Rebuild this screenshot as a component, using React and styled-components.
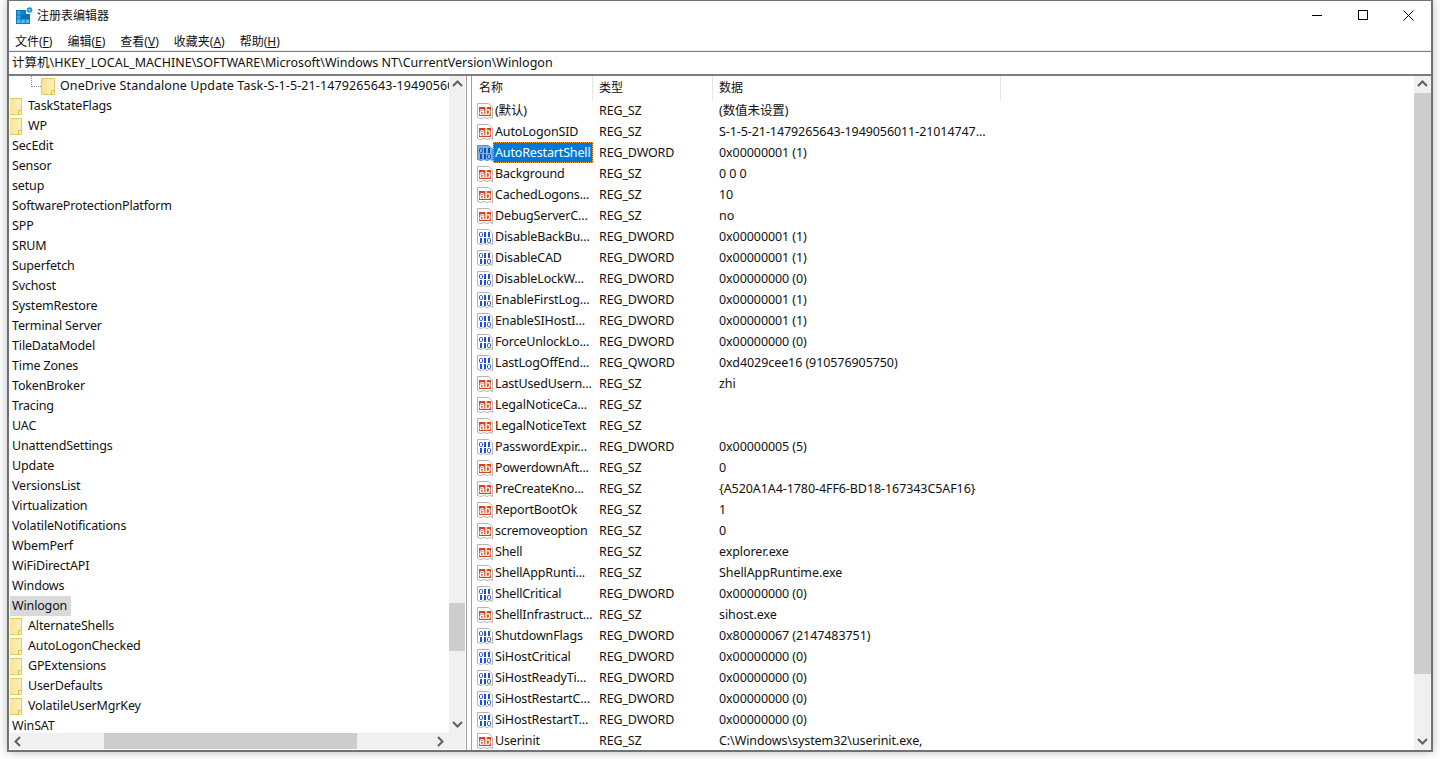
import React from "react";
import styled, { createGlobalStyle } from "styled-components";

const GlobalStyle = createGlobalStyle`
	html, body {
		margin: 0;
		padding: 0;
		height: 100%;
		overflow: hidden;
		background: #fff;
	}
`;

const UI_FONT = `"Noto Sans", "Noto Sans CJK SC", sans-serif`;

const Page = styled.div`
	height: 759px;
	padding: 0 7px;
	box-sizing: border-box;
	font-family: ${UI_FONT};
	font-size: 12.5px;
	letter-spacing: -0.15px;
	color: #111;
`;

const Window = styled.div`
	display: flex;
	flex-direction: column;
	height: 752px;
	box-sizing: border-box;
	background: #fff;
	border: 2px solid #6f7277;
	border-top-width: 1px;
	box-shadow: 0 0 9px rgba(0, 0, 0, 0.28);
	overflow: hidden;
`;

const TitleBar = styled.div`
	display: flex;
	align-items: center;
	height: 29px;
	flex: none;
	padding-left: 7px;
`;

const Title = styled.span`
	margin-left: 3px;
	padding-bottom: 2px;
	font-size: 12px;
	letter-spacing: 0;
	flex: 1;
`;

const WinButton = styled.div`
	display: flex;
	align-items: flex-start;
	justify-content: center;
	width: 45.5px;
	height: 29px;
	padding-top: 9px;
	box-sizing: border-box;
`;

const MenuBar = styled.div`
	display: flex;
	height: 18px;
	flex: none;
	padding: 2px 0 0 6px;
	align-items: center;
	border-bottom: 1px solid #f0f0f0;
	font-size: 12px;
	letter-spacing: 0;
`;

const MenuItem = styled.span`
	padding-right: 15px;
`;

const AddressBar = styled.div`
	height: 22px;
	flex: none;
	line-height: 21px;
	padding-left: 3px;
	border-top: 1px solid #7b7d80;
	border-bottom: 2px solid #7b7d80;
	letter-spacing: 0;
	white-space: nowrap;
`;

const Panes = styled.div`
	display: flex;
	flex: 1;
	min-height: 0;
`;

const TreePane = styled.div`
	display: grid;
	grid-template-columns: 439px 16px;
	grid-template-rows: 657px 16px;
	width: 455px;
	margin-left: 1px;
	flex: none;
`;

const TreeList = styled.div`
	overflow: hidden;
	background: #fff;
`;

const TreeRow = styled.div`
	display: flex;
	align-items: flex-start;
	height: 20px;
	white-space: nowrap;
`;

const TreeBranch = styled.span`
	flex: none;
	width: 10px;
	height: 11px;
	margin-left: 21px;
	box-sizing: border-box;
	border-left: 1px dotted #888;
	border-bottom: 1px dotted #888;
`;

const TreeLabel = styled.span`
	display: inline-block;
	height: 20px;
	line-height: 20px;
	padding: ${(p) => (p.$plain ? "0 4px 0 2px" : "0")};
	letter-spacing: ${(p) => (p.$long ? "0.1px" : "inherit")};
	background: ${(p) => (p.$active ? "#d9d9d9" : "transparent")};
`;

const FolderGlyph = styled.svg`
	flex: none;
	margin-top: 2px;
	margin-left: ${(p) => p.$offset}px;
	margin-right: ${(p) => p.$after}px;
`;

const ScrollTrack = styled.div`
	display: flex;
	flex-direction: ${(p) => (p.$horizontal ? "row" : "column")};
	flex: none;
	width: ${(p) => (p.$width ? `${p.$width}px` : "auto")};
	background: #f0f0f0;
	min-width: 0;
	min-height: 0;
`;

const ArrowCell = styled.div`
	display: flex;
	align-items: center;
	justify-content: center;
	flex: none;
	width: ${(p) => (p.$horizontal ? "17px" : "auto")};
	height: ${(p) => (p.$horizontal ? "auto" : "17px")};
`;

const TrackBody = styled.div`
	flex: 1;
	min-width: 0;
	min-height: 0;
`;

const ThumbV = styled.div`
	height: ${(p) => p.$size}px;
	margin-top: ${(p) => p.$start}px;
	background: #cdcdcd;
`;

const ThumbH = styled.div`
	width: ${(p) => p.$size}px;
	height: 100%;
	margin-left: ${(p) => p.$start}px;
	background: #cdcdcd;
`;

const Corner = styled.div`
	background: #f0f0f0;
`;

const Splitter = styled.div`
	flex: none;
	width: 6px;
	margin-left: 1px;
	box-sizing: border-box;
	border-left: 1px solid #a0a0a0;
	border-right: 1px solid #a0a0a0;
	background: #fff;
`;

const ValuePane = styled.div`
	display: flex;
	flex: 1;
	min-width: 0;
`;

const ValueBody = styled.div`
	flex: 1;
	min-width: 0;
	overflow: hidden;
`;

const HeaderRow = styled.div`
	display: flex;
	height: 24px;
`;

const HeaderCell = styled.div`
	width: ${(p) => p.$width}px;
	flex: none;
	box-sizing: border-box;
	padding-left: ${(p) => p.$pad}px;
	line-height: 23px;
	font-size: 12px;
	letter-spacing: 0;
	border-right: 1px solid #e5e5e5;
`;

const ValueRow = styled.div`
	display: flex;
	align-items: flex-start;
	height: 21px;
	line-height: 21px;
	white-space: nowrap;
`;

const NameCell = styled.div`
	display: flex;
	align-items: flex-start;
	width: 121px;
	height: 21px;
	flex: none;
	padding-left: 5px;
	box-sizing: border-box;
	overflow: hidden;
`;

const NameText = styled.span`
	flex: 1;
	height: 21px;
	padding-left: 2px;
	box-sizing: border-box;
	overflow: hidden;
	color: ${(p) => (p.$selected ? "#fff" : "inherit")};
	background: ${(p) => (p.$selected ? "#0078d7" : "transparent")};
	outline: ${(p) => (p.$selected ? "1px dotted #f7a13c" : "none")};
	outline-offset: -1px;
`;

const TypeCell = styled.div`
	width: 120px;
	flex: none;
	padding-left: 6px;
	box-sizing: border-box;
`;

const DataCell = styled.div`
	padding-left: 6px;
	letter-spacing: -0.08px;
`;

const IconWrap = styled.svg`
	flex: none;
	margin-top: 2px;
`;

const Chevron = ({ dir }) => {
	const points = {
		up: "1,7 5.5,2.5 10,7",
		down: "1,3 5.5,7.5 10,3",
		left: "7,1 2.5,5.5 7,10",
		right: "3,1 7.5,5.5 3,10",
	}[dir];
	return (
		<svg width="11" height="11" viewBox="0 0 11 11">
			<polyline points={points} fill="none" stroke="#606060" strokeWidth="2" />
		</svg>
	);
};

const AppIcon = () => (
	<svg width="18" height="17" viewBox="0 0 18 17">
		<rect x="0" y="3" width="14" height="14" fill="#0a78bd" />
		<rect x="1" y="4" width="3.5" height="3.5" fill="#2ea6e6" />
		<rect x="5.3" y="4" width="3.5" height="3.5" fill="#1588d0" />
		<rect x="1" y="8.3" width="3.5" height="3.5" fill="#2ea6e6" />
		<rect x="5.3" y="8.3" width="3.5" height="3.5" fill="#0e6fae" />
		<rect x="9.6" y="8.3" width="3.5" height="3.5" fill="#0e6fae" />
		<rect x="1" y="12.6" width="3.5" height="3.5" fill="#4cc0f5" />
		<rect x="5.3" y="12.6" width="3.5" height="3.5" fill="#4cc0f5" />
		<rect x="9.6" y="12.6" width="3.5" height="3.5" fill="#4cc0f5" />
		<rect x="10" y="3" width="4" height="4" fill="#fff" />
		<circle cx="13.5" cy="3" r="2.8" fill="#1f93d8" />
		<circle cx="13.5" cy="3" r="1" fill="#9fdcf8" />
	</svg>
);

const Folder = ({ offset, after = 6 }) => (
	<FolderGlyph $offset={offset} $after={after} width="14" height="17" viewBox="0 0 14 17">
		<defs>
			<linearGradient id="folderFill" x1="0" y1="0" x2="1" y2="0">
				<stop offset="0" stopColor="#fbe08e" />
				<stop offset="1" stopColor="#fff0bd" />
			</linearGradient>
		</defs>
		<path d="M0.5 0.5H13.5V16.5H0.5Z" fill="url(#folderFill)" stroke="#e8c767" />
		<path d="M10.5 16.5V12.5H13.5" fill="#fbe39b" stroke="#e3bf5c" />
	</FolderGlyph>
);

const PAGE_PATH = "M0.5 1.5H11.5L15.5 5V16.5L13 15.5L10 16.5L7 15.5L4 16.5L0.5 15.5Z";

const StringIcon = () => (
	<IconWrap width="16" height="18" viewBox="0 0 16 18">
		<path d={PAGE_PATH} fill="#fff" stroke="#b5b5b5" />
		<rect x="2" y="5" width="12" height="9" fill="#d9401f" />
		<text
			x="8"
			y="12.5"
			textAnchor="middle"
			fontSize="10"
			fontWeight="700"
			fontFamily="Liberation Sans, sans-serif"
			fill="#fff"
		>
			ab
		</text>
	</IconWrap>
);

const Bit = ({ x, y, on, color }) =>
	on ? (
		<rect x={x + 1} y={y} width="2" height="5" fill={color} />
	) : (
		<rect x={x + 0.5} y={y + 0.5} width="3" height="4" rx="1" fill="none" stroke={color} />
	);

const BinaryIcon = ({ selected }) => {
	const color = selected ? "#0e4fb5" : "#1f4fd6";
	return (
		<IconWrap width="16" height="18" viewBox="0 0 16 18">
			<path
				d={PAGE_PATH}
				fill={selected ? "#7fb2e5" : "#fff"}
				stroke={selected ? "#5a93cc" : "#b5b5b5"}
			/>
			<Bit x={2} y={4} on={false} color={color} />
			<Bit x={6} y={4} on color={color} />
			<Bit x={10} y={4} on color={color} />
			<Bit x={2} y={10} on color={color} />
			<Bit x={6} y={10} on color={color} />
			<Bit x={10} y={10} on={false} color={color} />
		</IconWrap>
	);
};

const PLAIN = [
	"SecEdit", "Sensor", "setup", "SoftwareProtectionPlatform", "SPP", "SRUM", "Superfetch",
	"Svchost", "SystemRestore", "Terminal Server", "TileDataModel", "Time Zones", "TokenBroker",
	"Tracing", "UAC", "UnattendSettings", "Update", "VersionsList", "Virtualization",
	"VolatileNotifications", "WbemPerf", "WiFiDirectAPI", "Windows",
];

const WINLOGON_KEYS = ["AlternateShells", "AutoLogonChecked", "GPExtensions", "UserDefaults", "VolatileUserMgrKey"];

const VALUES = [
	["(默认)", "REG_SZ", "(数值未设置)"],
	["AutoLogonSID", "REG_SZ", "S-1-5-21-1479265643-1949056011-21014747..."],
	["AutoRestartShell", "REG_DWORD", "0x00000001 (1)"],
	["Background", "REG_SZ", "0 0 0"],
	["CachedLogons...", "REG_SZ", "10"],
	["DebugServerC...", "REG_SZ", "no"],
	["DisableBackBu...", "REG_DWORD", "0x00000001 (1)"],
	["DisableCAD", "REG_DWORD", "0x00000001 (1)"],
	["DisableLockW...", "REG_DWORD", "0x00000000 (0)"],
	["EnableFirstLog...", "REG_DWORD", "0x00000001 (1)"],
	["EnableSIHostI...", "REG_DWORD", "0x00000001 (1)"],
	["ForceUnlockLo...", "REG_DWORD", "0x00000000 (0)"],
	["LastLogOffEnd...", "REG_QWORD", "0xd4029cee16 (910576905750)"],
	["LastUsedUsern...", "REG_SZ", "zhi"],
	["LegalNoticeCa...", "REG_SZ", ""],
	["LegalNoticeText", "REG_SZ", ""],
	["PasswordExpir...", "REG_DWORD", "0x00000005 (5)"],
	["PowerdownAft...", "REG_SZ", "0"],
	["PreCreateKno...", "REG_SZ", "{A520A1A4-1780-4FF6-BD18-167343C5AF16}"],
	["ReportBootOk", "REG_SZ", "1"],
	["scremoveoption", "REG_SZ", "0"],
	["Shell", "REG_SZ", "explorer.exe"],
	["ShellAppRunti...", "REG_SZ", "ShellAppRuntime.exe"],
	["ShellCritical", "REG_DWORD", "0x00000000 (0)"],
	["ShellInfrastruct...", "REG_SZ", "sihost.exe"],
	["ShutdownFlags", "REG_DWORD", "0x80000067 (2147483751)"],
	["SiHostCritical", "REG_DWORD", "0x00000000 (0)"],
	["SiHostReadyTi...", "REG_DWORD", "0x00000000 (0)"],
	["SiHostRestartC...", "REG_DWORD", "0x00000000 (0)"],
	["SiHostRestartT...", "REG_DWORD", "0x00000000 (0)"],
	["Userinit", "REG_SZ", "C:\\Windows\\system32\\userinit.exe,"],
];

const App = () => (
	<Page>
		<GlobalStyle />
		<Window>
			<TitleBar>
				<AppIcon />
				<Title>注册表编辑器</Title>
				<WinButton>
					<svg width="10" height="10" viewBox="0 0 10 10">
						<line x1="0" y1="5.5" x2="10" y2="5.5" stroke="#000" />
					</svg>
				</WinButton>
				<WinButton>
					<svg width="10" height="10" viewBox="0 0 10 10">
						<rect x="0.5" y="0.5" width="9" height="9" fill="none" stroke="#000" />
					</svg>
				</WinButton>
				<WinButton>
					<svg width="11" height="11" viewBox="0 0 11 11">
						<path d="M0.5 0.5L10.5 10.5M10.5 0.5L0.5 10.5" stroke="#000" fill="none" />
					</svg>
				</WinButton>
			</TitleBar>
			<MenuBar>
				<MenuItem>文件(<u>F</u>)</MenuItem>
				<MenuItem>编辑(<u>E</u>)</MenuItem>
				<MenuItem>查看(<u>V</u>)</MenuItem>
				<MenuItem>收藏夹(<u>A</u>)</MenuItem>
				<MenuItem>帮助(<u>H</u>)</MenuItem>
			</MenuBar>
			<AddressBar>计算机\HKEY_LOCAL_MACHINE\SOFTWARE\Microsoft\Windows NT\CurrentVersion\Winlogon</AddressBar>
			<Panes>
				<TreePane>
					<TreeList>
						<TreeRow>
							<TreeBranch />
							<Folder offset={0} after={5} />
							<TreeLabel $long>OneDrive Standalone Update Task-S-1-5-21-1479265643-19490560</TreeLabel>
						</TreeRow>
						<TreeRow>
							<Folder offset={-2} />
							<TreeLabel>TaskStateFlags</TreeLabel>
						</TreeRow>
						<TreeRow>
							<Folder offset={-2} />
							<TreeLabel>WP</TreeLabel>
						</TreeRow>
						{PLAIN.map((name) => (
							<TreeRow key={name}>
								<TreeLabel $plain>{name}</TreeLabel>
							</TreeRow>
						))}
						<TreeRow>
							<TreeLabel $plain $active>Winlogon</TreeLabel>
						</TreeRow>
						{WINLOGON_KEYS.map((name) => (
							<TreeRow key={name}>
								<Folder offset={-2} />
								<TreeLabel>{name}</TreeLabel>
							</TreeRow>
						))}
						<TreeRow>
							<TreeLabel $plain>WinSAT</TreeLabel>
						</TreeRow>
					</TreeList>
					<ScrollTrack>
						<ArrowCell><Chevron dir="up" /></ArrowCell>
						<TrackBody><ThumbV $start={510} $size={48} /></TrackBody>
						<ArrowCell><Chevron dir="down" /></ArrowCell>
					</ScrollTrack>
					<ScrollTrack $horizontal>
						<ArrowCell $horizontal><Chevron dir="left" /></ArrowCell>
						<TrackBody><ThumbH $start={77} $size={253} /></TrackBody>
						<ArrowCell $horizontal><Chevron dir="right" /></ArrowCell>
					</ScrollTrack>
					<Corner />
				</TreePane>
				<Splitter />
				<ValuePane>
					<ValueBody>
						<HeaderRow>
							<HeaderCell $width={121} $pad={7}>名称</HeaderCell>
							<HeaderCell $width={120} $pad={6}>类型</HeaderCell>
							<HeaderCell $width={288} $pad={6}>数据</HeaderCell>
						</HeaderRow>
						{VALUES.map(([name, type, data]) => {
							const selected = name === "AutoRestartShell";
							const binary = type !== "REG_SZ";
							return (
								<ValueRow key={name}>
									<NameCell>
										{binary ? <BinaryIcon selected={selected} /> : <StringIcon />}
										<NameText $selected={selected}>{name}</NameText>
									</NameCell>
									<TypeCell>{type}</TypeCell>
									<DataCell>{data}</DataCell>
								</ValueRow>
							);
						})}
					</ValueBody>
					<ScrollTrack $width={17}>
						<ArrowCell><Chevron dir="up" /></ArrowCell>
						<TrackBody><ThumbV $start={0} $size={581} /></TrackBody>
						<ArrowCell><Chevron dir="down" /></ArrowCell>
					</ScrollTrack>
				</ValuePane>
			</Panes>
		</Window>
	</Page>
);

export default App;
